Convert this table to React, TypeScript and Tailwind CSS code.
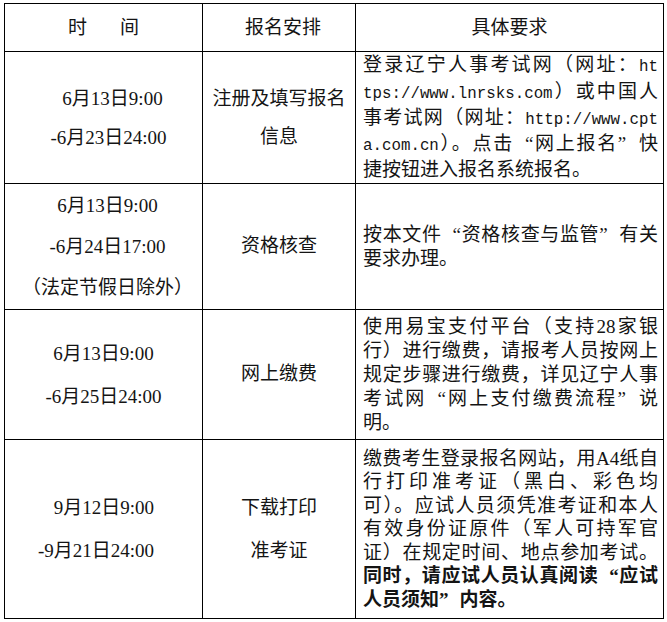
import React from "react";

const FONT = "font-['Liberation_Serif','Noto_Sans_CJK_SC',serif]";

function Mono({ children }: { children: React.ReactNode }) {
  return <span className="font-['Liberation_Mono','Noto_Sans_CJK_SC',monospace] text-[15.8px]">{children}</span>;
}

function LQ() {
  return <span className="ml-[11px]">“</span>;
}
function RQ() {
  return <span className="mr-[11px]">”</span>;
}

function J({ children, last }: { children: React.ReactNode; last?: boolean }) {
  return (
    <div className={last ? "text-left" : "text-justify [text-align-last:justify]"}>{children}</div>
  );
}

const cell = "border-r border-b border-black flex flex-col justify-center";

export default function App() {
  return (
    <div className={`min-h-[622px] w-[667px] bg-white text-[19px] text-[#141414] ${FONT}`}>
      <div className="ml-[4px] pt-[3px]">
        <div className="grid w-[660px] grid-cols-[198px_153px_308px] grid-rows-[48px_132px_126px_130px_179px] border-l border-t border-black">
          {/* Header */}
          <div className={`${cell} items-center`}>
            <div className="flex gap-[33px] leading-[24px]">
              <span>时</span>
              <span>间</span>
            </div>
          </div>
          <div className={`${cell} items-center`}>
            <div className="pl-[8px] leading-[24px]">报名安排</div>
          </div>
          <div className={`${cell} items-center`}>
            <div className="leading-[24px]">具体要求</div>
          </div>

          {/* Row 1 */}
          <div className={`${cell} items-center pl-[10px] leading-[39px]`}>
            <div className="ml-[8px]">6月13日9:00</div>
            <div>-6月23日24:00</div>
          </div>
          <div className={`${cell} items-center leading-[38px]`}>
            <div>注册及填写报名</div>
            <div>信息</div>
          </div>
          <div className={`${cell} pl-[7px] pr-[5px] leading-[23.3px]`}>
            <J>
              登录辽宁人事考试网（网址：<Mono>ht</Mono>
            </J>
            <J>
              <Mono>tps://www.lnrsks.com</Mono>）或中国人
            </J>
            <J>
              事考试网（网址：<Mono>http://www.cpt</Mono>
            </J>
            <J>
              <Mono>a.com.cn</Mono>）。点击<LQ />网上报名<RQ />快
            </J>
            <J last>捷按钮进入报名系统报名。</J>
          </div>

          {/* Row 2 */}
          <div className={`${cell} items-center pl-[8px] leading-[41px]`}>
            <div>6月13日9:00</div>
            <div>-6月24日17:00</div>
            <div>（法定节假日除外）</div>
          </div>
          <div className={`${cell} items-center`}>
            <div>资格核查</div>
          </div>
          <div className={`${cell} pl-[7px] pr-[5px] leading-[24px]`}>
            <J>
              按本文件<LQ />资格核查与监管<RQ />有关
            </J>
            <J last>要求办理。</J>
          </div>

          {/* Row 3 */}
          <div className={`${cell} items-center leading-[43px]`}>
            <div>6月13日9:00</div>
            <div>-6月25日24:00</div>
          </div>
          <div className={`${cell} items-center`}>
            <div>网上缴费</div>
          </div>
          <div className={`${cell} pl-[7px] pr-[5px] leading-[24px]`}>
            <J>使用易宝支付平台（支持28家银</J>
            <J>行）进行缴费，请报考人员按网上</J>
            <J>规定步骤进行缴费，详见辽宁人事</J>
            <J>
              考试网<LQ />网上支付缴费流程<RQ />说
            </J>
            <J last>明。</J>
          </div>

          {/* Row 4 */}
          <div className={`${cell} items-end pr-[48px] leading-[43px]`}>
            <div>9月12日9:00</div>
            <div>-9月21日24:00</div>
          </div>
          <div className={`${cell} items-center leading-[43px]`}>
            <div>下载打印</div>
            <div>准考证</div>
          </div>
          <div className={`${cell} pl-[7px] pr-[5px] leading-[23.5px]`}>
            <J>缴费考生登录报名网站，用A4纸自</J>
            <J>行打印准考证（黑白、彩色均</J>
            <J>可）。应试人员须凭准考证和本人</J>
            <J>有效身份证原件（军人可持军官</J>
            <J>证）在规定时间、地点参加考试。</J>
            <J>
              <span className="font-bold">
                同时，请应试人员认真阅读<LQ />应试
              </span>
            </J>
            <J last>
              <span className="font-bold">
                人员须知<RQ />内容。
              </span>
            </J>
          </div>
        </div>
      </div>
    </div>
  );
}
